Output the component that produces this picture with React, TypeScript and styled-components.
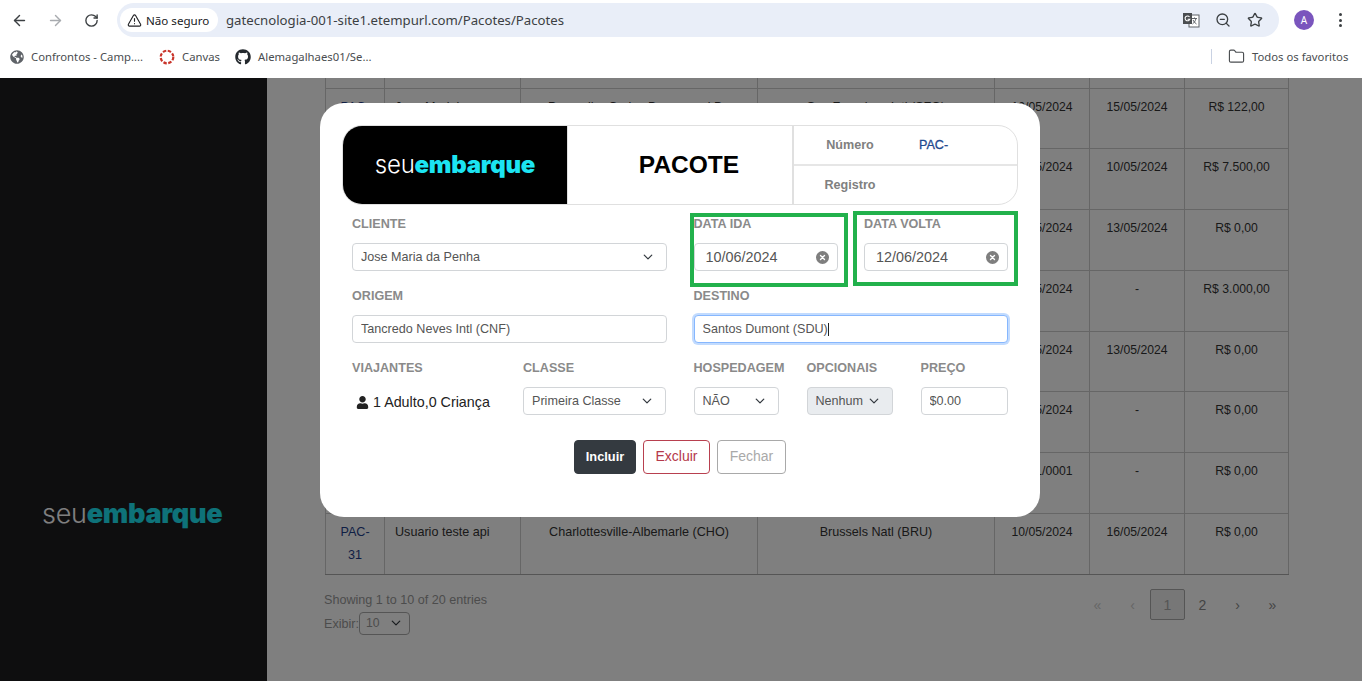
import React, { FC } from "react";
import styled, { createGlobalStyle } from "styled-components";
import { ArrowLeft, ArrowRight, RotateCw, TriangleAlert, ZoomOut, Star, Folder } from "lucide-react";
import { FaGithub, FaGlobeAmericas, FaUser } from "react-icons/fa";

const chevron = `url("data:image/svg+xml,%3csvg xmlns='http://www.w3.org/2000/svg' viewBox='0 0 16 16'%3e%3cpath fill='none' stroke='%23343a40' stroke-linecap='round' stroke-linejoin='round' stroke-width='2' d='m2 5 6 6 6-6'/%3e%3c/svg%3e")`;

const GlobalStyle = createGlobalStyle`
    html, body {
        margin: 0;
        padding: 0;
        overflow: hidden;
        background: #fff;
    }
    * {
        box-sizing: border-box;
    }
`;

const Screen = styled.div`
    width: 1362px;
    height: 681px;
    display: flex;
    flex-direction: column;
    overflow: hidden;
    font-family: "Liberation Sans", Arial, sans-serif;
`;

/* browser chrome */
const Chrome = styled.div`
    height: 78px;
    flex: none;
    background: #fff;
    font-family: "Noto Sans", sans-serif;
    color: #3c4043;
`;

const Toolbar = styled.div`
    height: 41px;
    padding: 3px 3px 4px 1px;
    display: flex;
    align-items: center;
`;

const NavButton = styled.div<{ $faded?: boolean }>`
    width: 36px;
    height: 34px;
    display: flex;
    align-items: center;
    justify-content: center;
    color: ${p => (p.$faded ? "#a8abaf" : "#3c4043")};
`;

const AddressBar = styled.div`
    width: 1162px;
    height: 34px;
    margin: 0 7px 0 8px;
    padding: 0 8px 0 3px;
    border-radius: 17px;
    background: #e9eef8;
    display: flex;
    align-items: center;
`;

const SecurityChip = styled.div`
    width: 98px;
    height: 24px;
    padding-left: 7px;
    border-radius: 12px;
    background: #fff;
    display: flex;
    align-items: center;
    gap: 4px;
    font-size: 11.6px;
    color: #202124;
`;

const Url = styled.span`
    margin-left: 8px;
    flex: 1;
    font-size: 13.2px;
    color: #3c4043;
`;

const BarIcon = styled.div`
    width: 32px;
    display: flex;
    justify-content: center;
    color: #3c4043;
`;

const Avatar = styled.div`
    width: 20px;
    height: 20px;
    border-radius: 50%;
    background: #7a55bd;
    color: #fff;
    font-size: 10px;
    display: flex;
    align-items: center;
    justify-content: center;
`;

const Dots = styled.div`
    display: flex;
    flex-direction: column;
    gap: 2.5px;
    > i {
        display: block;
        width: 3px;
        height: 3px;
        border-radius: 50%;
        background: #3c4043;
    }
`;

const Bookmarks = styled.div`
    height: 31px;
    padding: 0 13px 0 10px;
    display: flex;
    align-items: center;
    font-size: 11.3px;
    color: #4a4d50;
`;

const Bookmark = styled.div<{ $width: number }>`
    width: ${p => p.$width}px;
    flex: none;
    display: flex;
    align-items: center;
    gap: 7px;
    white-space: nowrap;
`;

const Separator = styled.div`
    width: 1px;
    height: 15px;
    margin-left: auto;
    margin-right: 16px;
    background: #c9d2e3;
`;

/* page behind the modal */
const Page = styled.div`
    position: relative;
    flex: 1;
    display: flex;
    min-height: 0;
    background: #fff;
`;

const Sidebar = styled.aside`
    width: 267px;
    flex: none;
    padding: 420px 0 0 42px;
    background: #1d1d1f;
`;

const LogoText = styled.div<{ $size: number }>`
    font-family: Inter, sans-serif;
    font-size: ${p => p.$size}px;
    line-height: 1.2;
    letter-spacing: -0.01em;
    white-space: nowrap;
    color: #fff;
    span {
        font-weight: 300;
    }
    b {
        font-weight: 900;
        color: #1ce4f2;
    }
`;

const Content = styled.main`
    flex: 1;
    padding-left: 58px;
`;

const Table = styled.table`
    width: 963px;
    table-layout: fixed;
    border-collapse: collapse;
    color: #333;
    tbody tr:last-child td {
        border-bottom-color: #aaa;
    }
`;

const HeadCell = styled.th`
    height: 10px;
    padding: 0;
    border: 1px solid #ccc;
    border-top: 0;
`;

const Cell = styled.td<{ $center?: boolean; $numeric?: boolean }>`
    height: 60.8px;
    padding: 7px 10px 0;
    vertical-align: top;
    font-size: ${p => (p.$numeric ? "12.2px" : "12.6px")};
    line-height: 23px;
    border: 1px solid #ccc;
    text-align: ${p => (p.$center ? "center" : "left")};
`;

const CodeLink = styled.span`
    color: #1e3f8a;
`;

const TableFooter = styled.div`
    width: 963px;
    margin: 14px 0 0 -1px;
    display: flex;
    justify-content: space-between;
    font-size: 12.6px;
    color: #999;
`;

const EntriesInfo = styled.div`
    line-height: 23px;
`;

const PageSize = styled.select`
    width: 51px;
    height: 23px;
    padding: 0 0 0 6px;
    appearance: none;
    border: 1px solid #aaa;
    border-radius: 4px;
    background: transparent ${chevron} no-repeat right 8px center / 10px;
    font: 12.2px "Liberation Sans", Arial, sans-serif;
    color: #999;
`;

const Pagination = styled.div`
    margin: 0 -3px 0 0;
    display: flex;
    align-items: flex-start;
`;

const PageItem = styled.div<{ $active?: boolean; $muted?: boolean }>`
    width: 35px;
    height: 31px;
    padding-top: 1px;
    display: flex;
    align-items: center;
    justify-content: center;
    border-radius: 2px;
    border: 1px solid ${p => (p.$active ? "#aaa" : "transparent")};
    background: ${p => (p.$active ? "#eee" : "transparent")};
    color: ${p => (p.$muted ? "#ccc" : p.$active ? "#aaa" : "#888")};
    font-size: 14px;
`;

const Backdrop = styled.div`
    position: absolute;
    inset: 0;
    padding: 25px 2px 0 0;
    display: flex;
    justify-content: center;
    align-items: flex-start;
    background: rgba(0, 0, 0, 0.5);
`;

/* modal */
const Modal = styled.div`
    position: relative;
    width: 720px;
    height: 414px;
    padding: 22px;
    border-radius: 24px;
    background: #fff;
`;

const ModalHeader = styled.header`
    height: 80px;
    display: grid;
    grid-template-columns: 224px 227px 1fr;
    border: 1px solid #e0e0e0;
    border-radius: 20px;
    overflow: hidden;
`;

const HeaderLogo = styled.div`
    background: #000;
    display: flex;
    align-items: center;
    justify-content: center;
`;

const HeaderTitle = styled.h1`
    margin: 0;
    padding-left: 18px;
    display: flex;
    align-items: center;
    justify-content: center;
    border-left: 1px solid #e0e0e0;
    border-right: 2px solid #e0e0e0;
    font-size: 24.5px;
    color: #000;
`;

const HeaderInfo = styled.div`
    display: grid;
    grid-template-rows: 40px 1fr;
    font-size: 12.6px;
    font-weight: bold;
    color: #808080;
`;

const InfoRow = styled.div<{ $divided?: boolean }>`
    display: flex;
    align-items: center;
    border-bottom: ${p => (p.$divided ? "2px solid #e6e6e6" : "0")};
`;

const InfoName = styled.span`
    width: 112px;
    text-align: center;
`;

const InfoValue = styled.span`
    margin-left: 13px;
    font-weight: normal;
    -webkit-text-stroke: 0.3px #1f4a8f;
    color: #1f4a8f;
`;

const Form = styled.form`
    padding: 11px 10px 0;
`;

const FieldRow = styled.div<{ $cols: string }>`
    display: grid;
    grid-template-columns: ${p => p.$cols};
    margin-bottom: 17px;
`;

const Label = styled.label`
    display: block;
    height: 16px;
    margin-bottom: 11px;
    font-size: 12.6px;
    line-height: 16px;
    font-weight: bold;
    color: #8a8a8a;
`;

const controlBase = `
    display: block;
    width: 100%;
    height: 28px;
    border: 1px solid #d2d5d8;
    border-radius: 4px;
    font-family: "Liberation Sans", Arial, sans-serif;
    font-size: 12.6px;
    color: #555;
    outline: none;
`;

const TextInput = styled.input<{ $focused?: boolean }>`
    ${controlBase}
    padding: 0 8px;
    background: #fff;
    ${p =>
        p.$focused &&
        `border-color: #86b7fe;
         box-shadow: 0 0 0 2px rgba(13, 110, 253, 0.25);`}
`;

const Select = styled.select<{ $shaded?: boolean }>`
    ${controlBase}
    appearance: none;
    padding: 0 24px 0 8px;
    background: ${p => (p.$shaded ? "#e9ecef" : "#fff")} ${chevron} no-repeat right 13px center / 10px;
`;

const DateBox = styled.div`
    height: 28px;
    padding: 0 8px 0 11px;
    display: flex;
    align-items: center;
    border: 1px solid #d2d5d8;
    border-radius: 4px;
`;

const DateValue = styled.input`
    flex: 1;
    min-width: 0;
    padding: 0;
    border: 0;
    outline: none;
    font: 14.4px "Liberation Sans", Arial, sans-serif;
    color: #555;
`;

const CaretWrap = styled.div`
    position: relative;
`;

const Caret = styled.span`
    position: absolute;
    left: 134px;
    top: 8px;
    width: 1px;
    height: 13px;
    background: #222;
`;

const Travelers = styled.div`
    height: 28px;
    padding: 2px 0 0 4px;
    display: flex;
    align-items: center;
    gap: 4px;
    font-size: 14.3px;
    color: #222;
`;

const Actions = styled.div`
    margin-top: 25px;
    display: flex;
    justify-content: center;
    gap: 7px;
`;

const ActionButton = styled.button<{ $variant: "dark" | "danger" | "muted"; $width: number }>`
    width: ${p => p.$width}px;
    height: 34px;
    padding: 0 0 2px;
    border-radius: 4px;
    font-family: "Liberation Sans", Arial, sans-serif;
    font-size: ${p => (p.$variant === "dark" ? "12.8px" : "14px")};
    font-weight: ${p => (p.$variant === "dark" ? "bold" : "normal")};
    border: 1px solid
        ${p => (p.$variant === "dark" ? "#343a40" : p.$variant === "danger" ? "#b8404f" : "#a9a9a9")};
    background: ${p => (p.$variant === "dark" ? "#343a40" : "#fff")};
    color: ${p => (p.$variant === "dark" ? "#fff" : p.$variant === "danger" ? "#b5394b" : "#a9a9a9")};
`;

const Highlight = styled.div<{ $x: number; $y: number; $w: number; $h: number }>`
    position: absolute;
    left: ${p => p.$x}px;
    top: ${p => p.$y}px;
    width: ${p => p.$w}px;
    height: ${p => p.$h}px;
    border: 4px solid #22b14c;
    pointer-events: none;
`;

const TranslateIcon: FC = () => (
    <svg width="18" height="18" viewBox="0 0 18 18">
        <rect x="7" y="4" width="10" height="12" fill="#fff" stroke="#5f6368" />
        <rect x="1" y="2" width="9" height="11" fill="#4a4d50" />
        <path d="M7.5 6a2.4 2.4 0 1 0 .3 2.2H5.6" fill="none" stroke="#fff" strokeWidth="1.1" />
        <path d="M10 7.5h5M12.5 6.5v1M14 7.5c-.6 2.6-2 4.500-3.500 5.500M11 9c.7 1.500 2 3 3.500 4" fill="none" stroke="#5f6368" />
    </svg>
);

const CanvasIcon: FC = () => (
    <svg width="16" height="16" viewBox="0 0 16 16">
        <circle cx="8" cy="8" r="6.300" fill="none" stroke="#c9352b" strokeWidth="2.200" strokeDasharray="3.400 1.550" />
    </svg>
);

const ClearIcon: FC = () => (
    <svg width="13" height="13" viewBox="0 0 13 13">
        <circle cx="6.500" cy="6.500" r="6.500" fill="#7f7f7f" />
        <path d="M4.500 4.500l4 4M8.500 4.500l-4 4" stroke="#fff" strokeWidth="1.400" strokeLinecap="round" />
    </svg>
);

const Logo: FC<{ size: number }> = ({ size }) => (
    <LogoText $size={size}>
        <span>seu</span>
        <b>embarque</b>
    </LogoText>
);

// Rows 2-7 sit mostly behind the modal, so only their right-hand columns are filled in
const rows = [
    ["PAC-", "Jose Madeira", "Pampulha Carlos Drummond De", "Sao Francisco Intl (SFO)", "10/05/2024", "15/05/2024", "R$ 122,00"],
    ["", "", "", "", "05/05/2024", "10/05/2024", "R$ 7.500,00"],
    ["", "", "", "", "10/05/2024", "13/05/2024", "R$ 0,00"],
    ["", "", "", "", "10/05/2024", "-", "R$ 3.000,00"],
    ["", "", "", "", "10/05/2024", "13/05/2024", "R$ 0,00"],
    ["", "", "", "", "10/05/2024", "-", "R$ 0,00"],
    ["", "", "", "", "01/01/0001", "-", "R$ 0,00"],
    ["PAC-31", "Usuario teste api", "Charlottesville-Albemarle (CHO)", "Brussels Natl (BRU)", "10/05/2024", "16/05/2024", "R$ 0,00"]
];

const colWidths = [59, 136, 237, 237, 95, 95, 104];

export default function App() {
    return (
        <Screen>
            <GlobalStyle />
            <Chrome>
                <Toolbar>
                    <NavButton><ArrowLeft size={17} strokeWidth={2} /></NavButton>
                    <NavButton $faded><ArrowRight size={17} strokeWidth={2} /></NavButton>
                    <NavButton><RotateCw size={15} strokeWidth={2.2} /></NavButton>
                    <AddressBar>
                        <SecurityChip>
                            <TriangleAlert size={15} strokeWidth={1.8} />
                            Não seguro
                        </SecurityChip>
                        <Url>gatecnologia-001-site1.etempurl.com/Pacotes/Pacotes</Url>
                        <BarIcon><TranslateIcon /></BarIcon>
                        <BarIcon><ZoomOut size={16} strokeWidth={2} /></BarIcon>
                        <BarIcon><Star size={16} strokeWidth={2} /></BarIcon>
                    </AddressBar>
                    <NavButton><Avatar>A</Avatar></NavButton>
                    <NavButton><Dots><i /><i /><i /></Dots></NavButton>
                </Toolbar>
                <Bookmarks>
                    <Bookmark $width={149}><FaGlobeAmericas size={14} color="#5f6368" />Confrontos - Camp....</Bookmark>
                    <Bookmark $width={76}><CanvasIcon />Canvas</Bookmark>
                    <Bookmark $width={140}><FaGithub size={16} color="#24292e" />Alemagalhaes01/Se...</Bookmark>
                    <Separator />
                    <Bookmark $width={121}><Folder size={17} strokeWidth={1.6} />Todos os favoritos</Bookmark>
                </Bookmarks>
            </Chrome>
            <Page>
                <Sidebar>
                    <Logo size={27} />
                </Sidebar>
                <Content>
                    <Table>
                        <colgroup>
                            {colWidths.map((w, i) => (
                                <col key={i} width={w} />
                            ))}
                        </colgroup>
                        <thead>
                            <tr>
                                {colWidths.map((_, i) => (
                                    <HeadCell key={i} />
                                ))}
                            </tr>
                        </thead>
                        <tbody>
                            {rows.map((row, r) => (
                                <tr key={r}>
                                    <Cell $center><CodeLink>{row[0]}</CodeLink></Cell>
                                    <Cell>{row[1]}</Cell>
                                    {row.slice(2).map((value, c) => (
                                        <Cell $center $numeric={c > 1} key={c}>{value}</Cell>
                                    ))}
                                </tr>
                            ))}
                        </tbody>
                    </Table>
                    <TableFooter>
                        <EntriesInfo>
                            Showing 1 to 10 of 20 entries
                            <br />
                            Exibir:
                            <PageSize defaultValue="10">
                                <option>10</option>
                            </PageSize>
                        </EntriesInfo>
                        <Pagination>
                            <PageItem $muted>«</PageItem>
                            <PageItem $muted>‹</PageItem>
                            <PageItem $active>1</PageItem>
                            <PageItem>2</PageItem>
                            <PageItem>›</PageItem>
                            <PageItem>»</PageItem>
                        </Pagination>
                    </TableFooter>
                </Content>
                <Backdrop>
                    <Modal>
                        <ModalHeader>
                            <HeaderLogo><Logo size={24} /></HeaderLogo>
                            <HeaderTitle>PACOTE</HeaderTitle>
                            <HeaderInfo>
                                <InfoRow $divided><InfoName>Número</InfoName><InfoValue>PAC-</InfoValue></InfoRow>
                                <InfoRow><InfoName>Registro</InfoName></InfoRow>
                            </HeaderInfo>
                        </ModalHeader>
                        <Form>
                            <FieldRow $cols="315px 26.5px 144px 26.5px 144px">
                                <div>
                                    <Label>CLIENTE</Label>
                                    <Select defaultValue="Jose Maria da Penha">
                                        <option>Jose Maria da Penha</option>
                                    </Select>
                                </div>
                                <span />
                                <div>
                                    <Label>DATA IDA</Label>
                                    <DateBox>
                                        <DateValue defaultValue="10/06/2024" />
                                        <ClearIcon />
                                    </DateBox>
                                </div>
                                <span />
                                <div>
                                    <Label>DATA VOLTA</Label>
                                    <DateBox>
                                        <DateValue defaultValue="12/06/2024" />
                                        <ClearIcon />
                                    </DateBox>
                                </div>
                            </FieldRow>
                            <FieldRow $cols="315px 26.5px 314.500px">
                                <div>
                                    <Label>ORIGEM</Label>
                                    <TextInput defaultValue="Tancredo Neves Intl (CNF)" />
                                </div>
                                <span />
                                <div>
                                    <Label>DESTINO</Label>
                                    <CaretWrap>
                                        <TextInput $focused defaultValue="Santos Dumont (SDU)" />
                                        <Caret />
                                    </CaretWrap>
                                </div>
                            </FieldRow>
                            <FieldRow $cols="171px 143px 27.500px 85px 28px 86px 28px 87.500px">
                                <div>
                                    <Label>VIAJANTES</Label>
                                    <Travelers><FaUser size={13} color="#222" /> 1 Adulto,0 Criança</Travelers>
                                </div>
                                <div>
                                    <Label>CLASSE</Label>
                                    <Select defaultValue="Primeira Classe">
                                        <option>Primeira Classe</option>
                                    </Select>
                                </div>
                                <span />
                                <div>
                                    <Label>HOSPEDAGEM</Label>
                                    <Select defaultValue="NÃO">
                                        <option>NÃO</option>
                                    </Select>
                                </div>
                                <span />
                                <div>
                                    <Label>OPCIONAIS</Label>
                                    <Select $shaded defaultValue="Nenhum">
                                        <option>Nenhum</option>
                                    </Select>
                                </div>
                                <span />
                                <div>
                                    <Label>PREÇO</Label>
                                    <TextInput defaultValue="$0.00" />
                                </div>
                            </FieldRow>
                            <Actions>
                                <ActionButton type="button" $variant="dark" $width={62}>Incluir</ActionButton>
                                <ActionButton type="button" $variant="danger" $width={67}>Excluir</ActionButton>
                                <ActionButton type="button" $variant="muted" $width={69}>Fechar</ActionButton>
                            </Actions>
                        </Form>
                        <Highlight $x={370} $y={110} $w={158} $h={74} />
                        <Highlight $x={533} $y={108} $w={165} $h={75} />
                    </Modal>
                </Backdrop>
            </Page>
        </Screen>
    );
}
